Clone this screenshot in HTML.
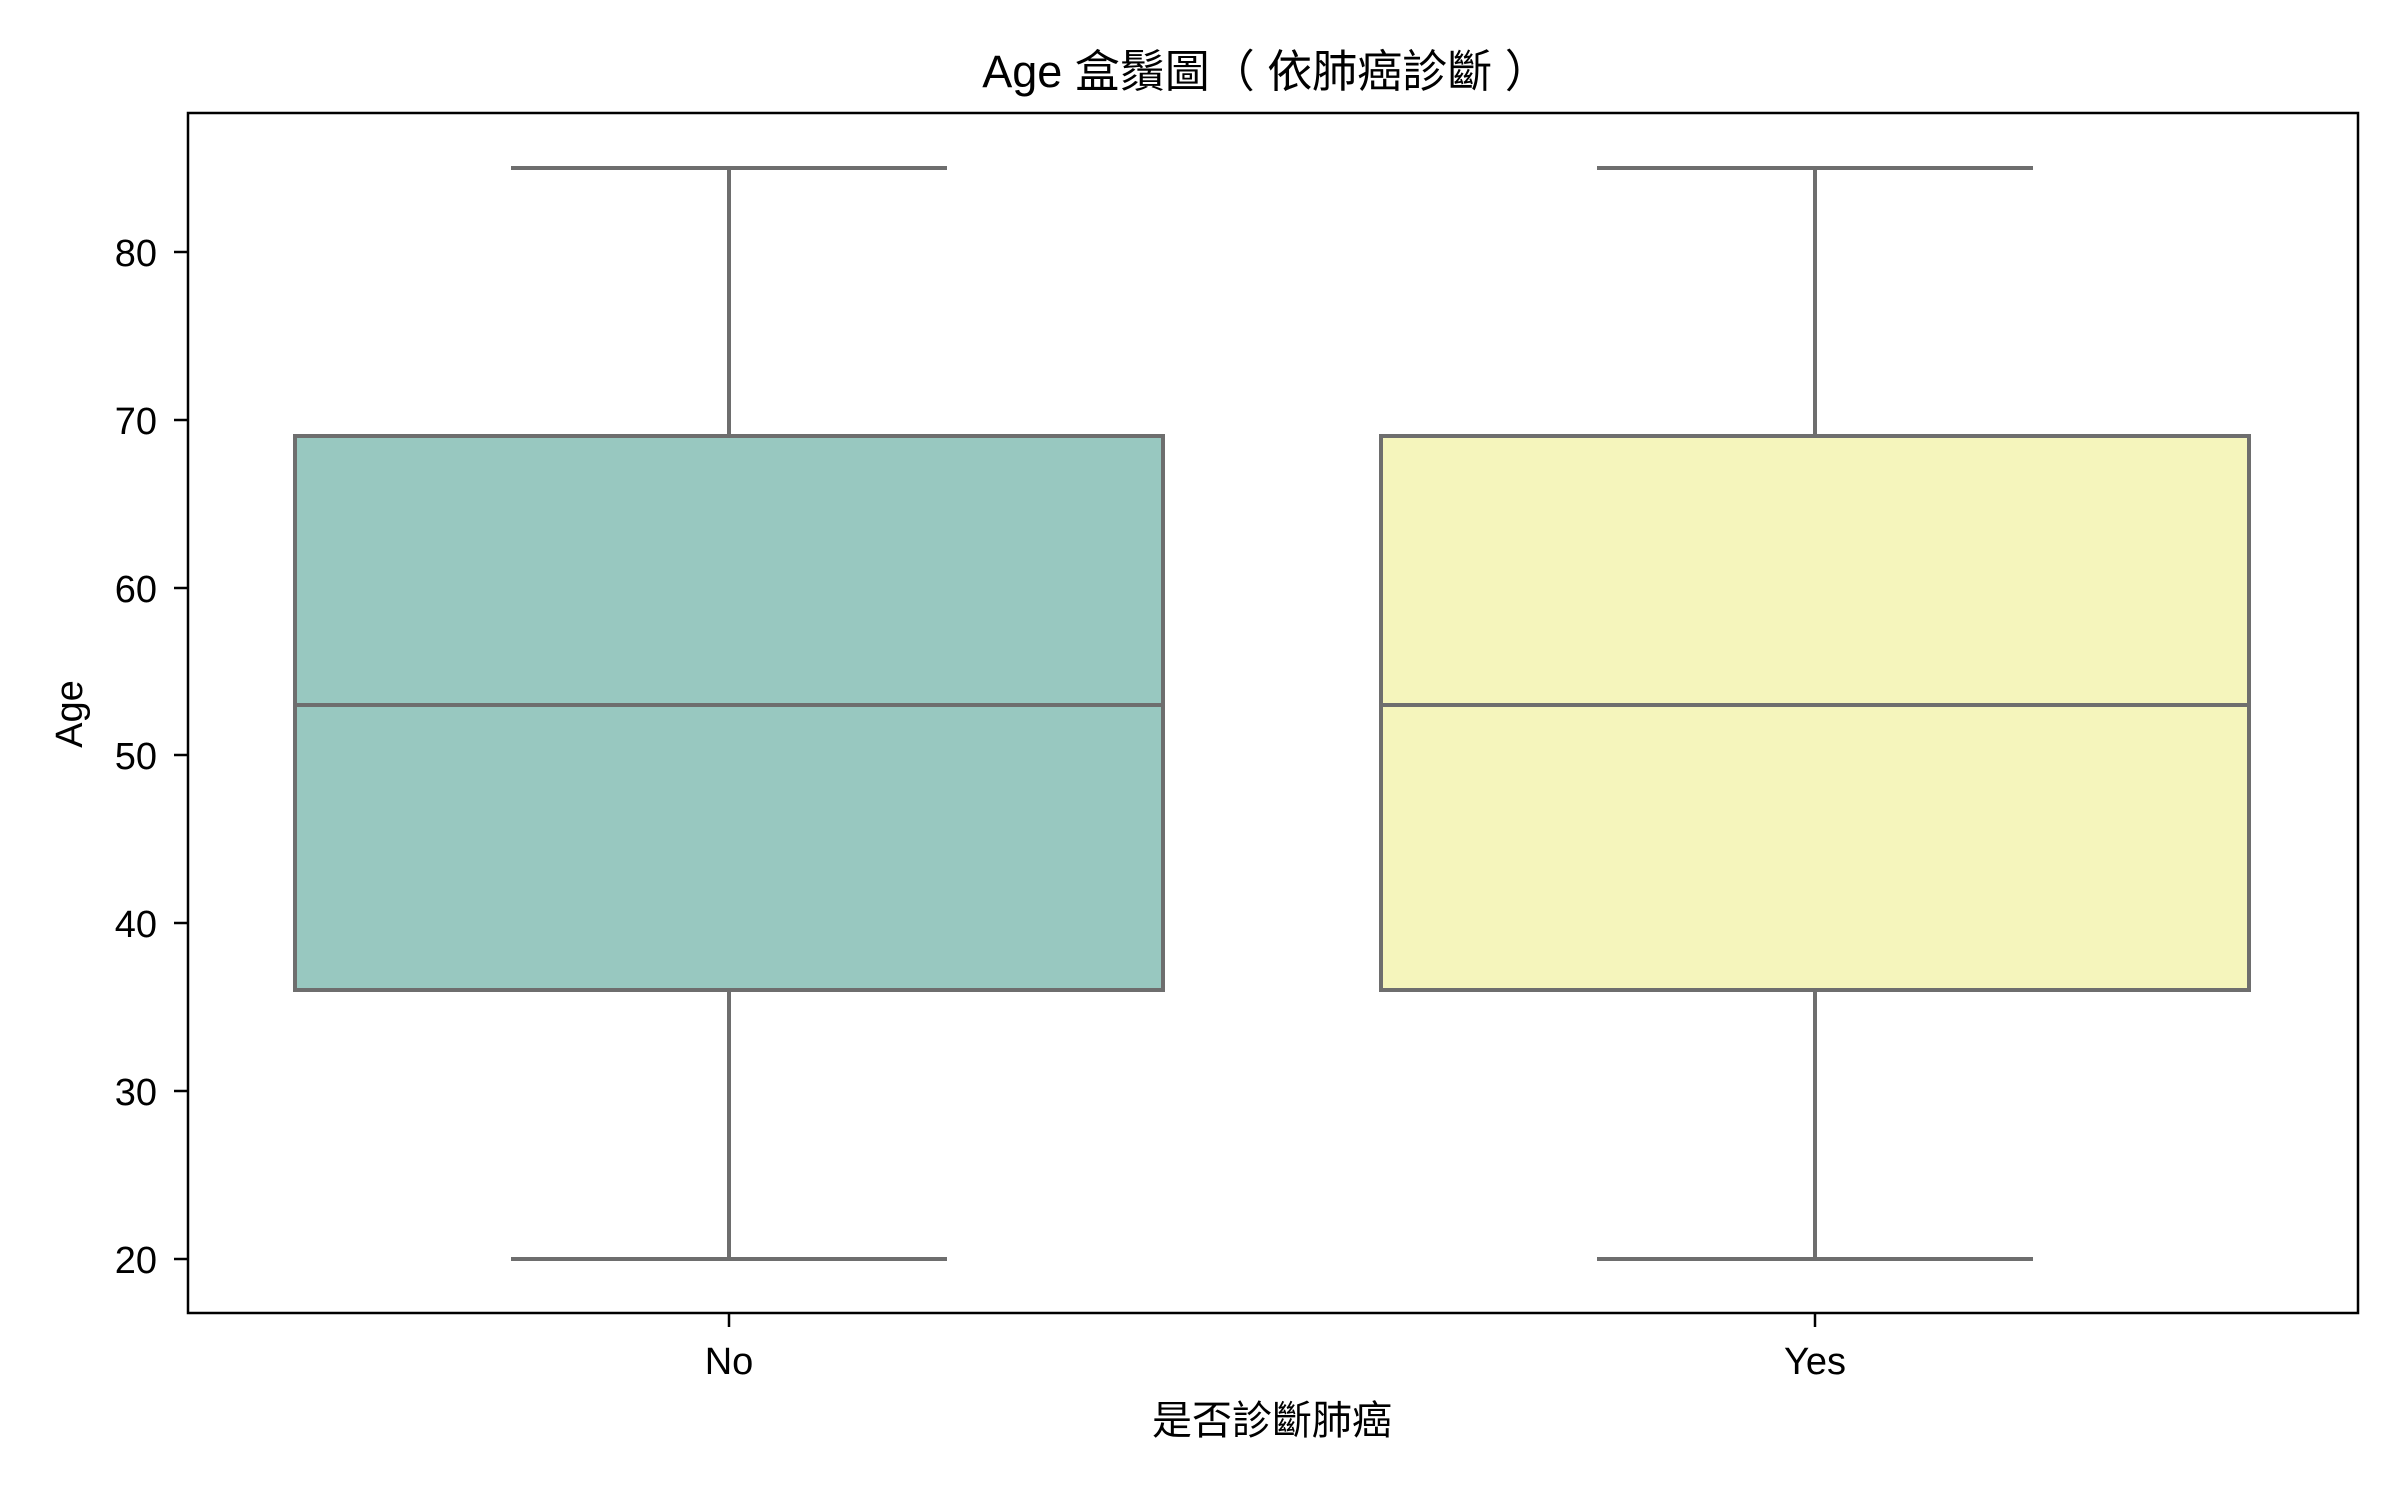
<!DOCTYPE html>
<html><head><meta charset="utf-8"><style>
html,body{margin:0;padding:0;background:#fff;width:2400px;height:1500px;overflow:hidden}
svg{display:block}
text{font-family:"Liberation Sans","Noto Sans CJK TC",sans-serif;fill:#000}
</style></head><body>
<svg width="2400" height="1500" viewBox="0 0 2400 1500" xmlns="http://www.w3.org/2000/svg">
<rect width="2400" height="1500" fill="#fff"/>
<text x="1266" y="87" font-size="45" text-anchor="middle" xml:space="preserve">Age 盒鬚圖（ 依肺癌診斷 ）</text>
<g stroke="#6e6e6e" stroke-width="4" fill="none">
  <line x1="729" y1="168" x2="729" y2="436"/>
  <line x1="729" y1="990" x2="729" y2="1259"/>
  <line x1="511" y1="168" x2="947" y2="168"/>
  <line x1="511" y1="1259" x2="947" y2="1259"/>
  <rect x="295" y="436" width="868" height="554" fill="#98c8c0"/>
  <line x1="295" y1="705" x2="1163" y2="705"/>
  <line x1="1815" y1="168" x2="1815" y2="436"/>
  <line x1="1815" y1="990" x2="1815" y2="1259"/>
  <line x1="1597" y1="168" x2="2033" y2="168"/>
  <line x1="1597" y1="1259" x2="2033" y2="1259"/>
  <rect x="1381" y="436" width="868" height="554" fill="#f5f5bc"/>
  <line x1="1381" y1="705" x2="2249" y2="705"/>
</g>
<rect x="188" y="113" width="2170" height="1200" fill="none" stroke="#000" stroke-width="2.5"/>
<g stroke="#000" stroke-width="2.5">
  <line x1="174" y1="252" x2="188" y2="252"/>
  <line x1="174" y1="420" x2="188" y2="420"/>
  <line x1="174" y1="588" x2="188" y2="588"/>
  <line x1="174" y1="755" x2="188" y2="755"/>
  <line x1="174" y1="923" x2="188" y2="923"/>
  <line x1="174" y1="1091" x2="188" y2="1091"/>
  <line x1="174" y1="1259" x2="188" y2="1259"/>
  <line x1="729" y1="1313" x2="729" y2="1327"/>
  <line x1="1815" y1="1313" x2="1815" y2="1327"/>
</g>
<g font-size="38" text-anchor="end">
  <text x="157" y="266">80</text>
  <text x="157" y="434">70</text>
  <text x="157" y="602">60</text>
  <text x="157" y="769">50</text>
  <text x="157" y="937">40</text>
  <text x="157" y="1105">30</text>
  <text x="157" y="1273">20</text>
</g>
<g font-size="38" text-anchor="middle">
  <text x="729" y="1374">No</text>
  <text x="1815" y="1374">Yes</text>
  <text x="1272" y="1434" font-size="40">是否診斷肺癌</text>
  <text transform="translate(82,714) rotate(-90)">Age</text>
</g>
</svg>
</body></html>
